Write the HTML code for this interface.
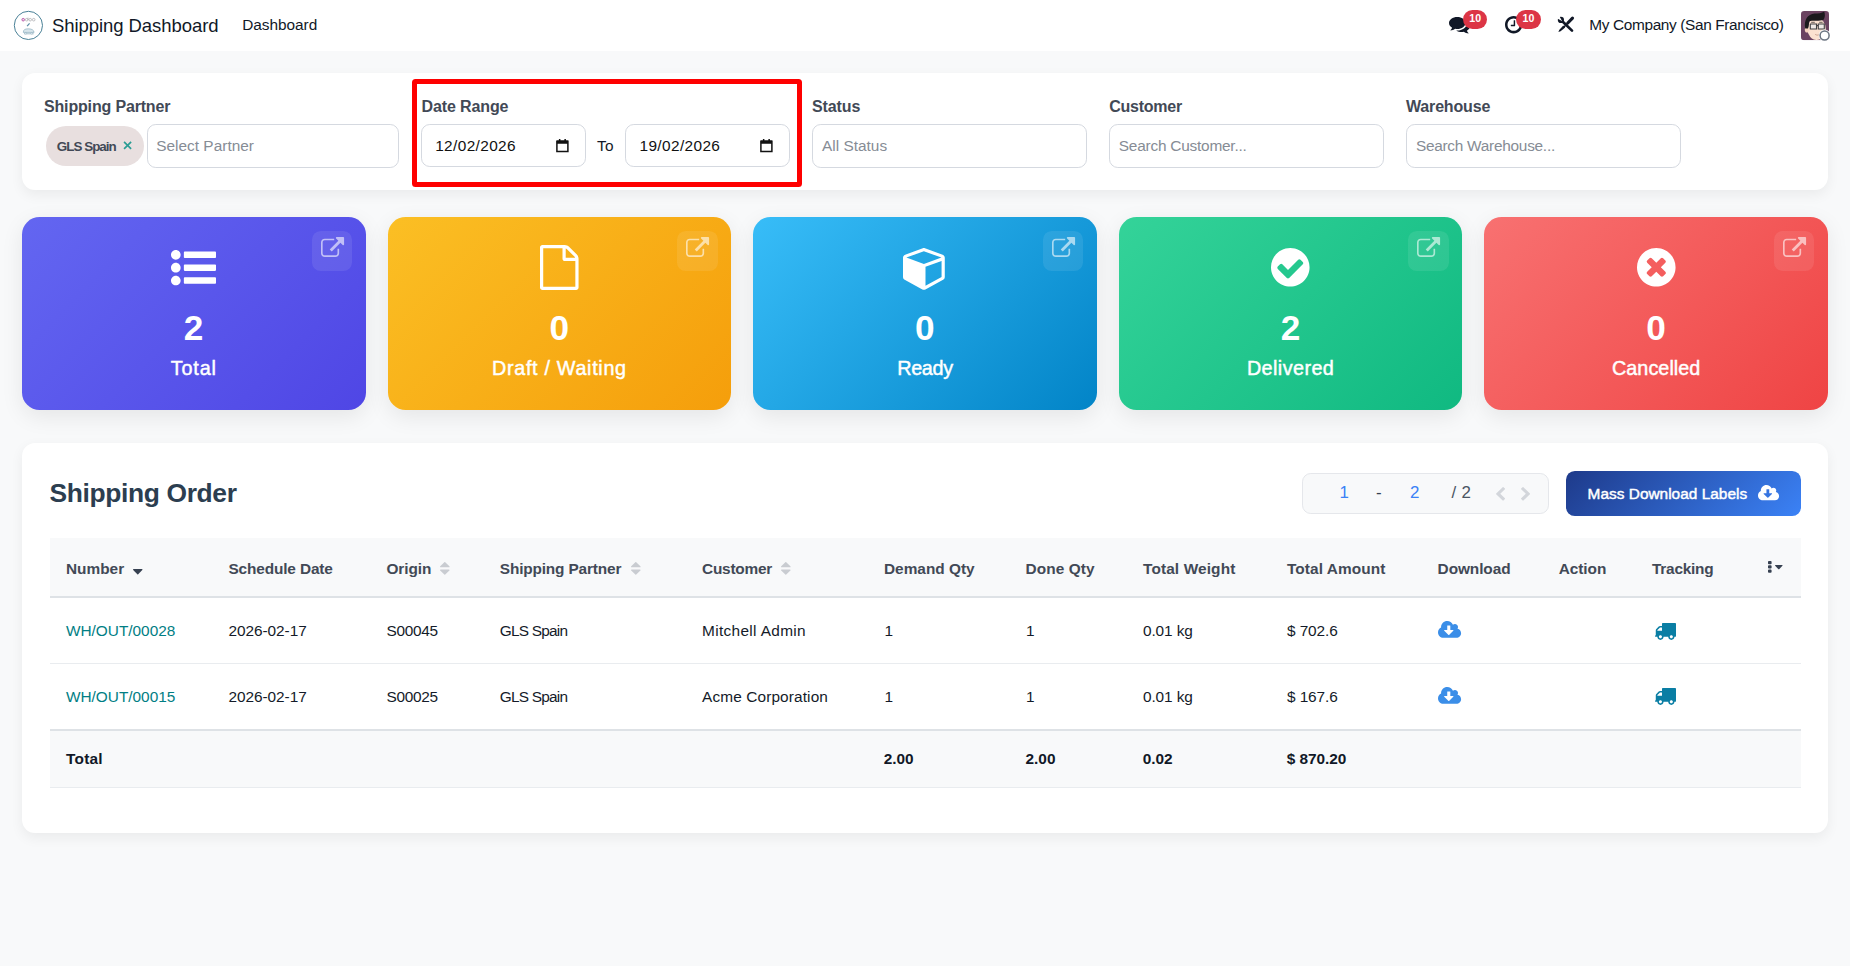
<!DOCTYPE html>
<html lang="en"><head><meta charset="utf-8"><title>Shipping Dashboard</title>
<style>
html,body{margin:0;padding:0}
body{width:1850px;height:966px;position:relative;overflow:hidden;background:#f8f9fa;font-family:"Liberation Sans",sans-serif}
.t{position:absolute;white-space:pre;line-height:1;display:block}
.ic{position:absolute;display:block;overflow:visible}
.abs{position:absolute;box-sizing:border-box}
.nav{position:absolute;left:0;top:0;width:1850px;height:51px;background:#fff}
.panel{position:absolute;background:#fff;border-radius:13.2px;box-shadow:0 4.4px 13.2px rgba(0,0,0,.06)}
.inp{position:absolute;box-sizing:border-box;background:#fff;border:1px solid #d5d9e0;border-radius:8.8px}
.card{position:absolute;top:217px;width:343.6px;height:193px;border-radius:17.6px;box-shadow:0 6.6px 22px rgba(0,0,0,.08)}
.open{position:absolute;right:13.6px;top:13.9px;width:40.4px;height:40.2px;border-radius:8.8px;background:rgba(255,255,255,.085)}
.badge{position:absolute;top:10.2px;width:24.5px;height:19px;border-radius:9.5px;background:#dc3545}
</style></head>
<body>
<header>
<div class="nav"></div>
<svg class="ic" style="left:13px;top:10px;width:31px;height:31px" viewBox="0 0 31 31">
<circle cx="15.400" cy="15.400" r="14.100" fill="#fff" stroke="#4a8197" stroke-width="1"/>
<circle cx="10.200" cy="9.700" r="1.300" fill="#f3d9ee" stroke="#b452a4" stroke-width=".9"/>
<path d="M12.400 9.700a1.300 1.300 0 1 0 2.600 0a1.300 1.300 0 1 0-2.600 0M15 7.600v2.400M15.900 9.700a1.300 1.300 0 1 0 2.600 0a1.300 1.300 0 1 0-2.600 0M19.400 9.700a1.300 1.300 0 1 0 2.600 0a1.300 1.300 0 1 0-2.600 0" fill="none" stroke="#9a9a9f" stroke-width=".6"/>
<path d="M14.100 16.200l2.500-2.900" stroke="#5a8ea6" stroke-width="1.200" fill="none"/>
<path d="M10.300 22.400c0-2.700 1.700-3.600 4.900-3.600c3.700 0 5.700 1.300 5.900 3.600z" fill="#d8e6ec" stroke="#7fa5b7" stroke-width=".6"/>
<path d="M11 23.800h9.600" stroke="#8fb0bf" stroke-width=".8"/>
<circle cx="12.800" cy="23.300" r=".9" fill="#fff" stroke="#7fa5b7" stroke-width=".5"/><circle cx="18.800" cy="23.300" r=".9" fill="#fff" stroke="#7fa5b7" stroke-width=".5"/>
</svg>
<svg class="ic" style="left:1448.5px;top:17.0px;width:21.0px;height:16.5px;" viewBox="0 -1280 1792 1408.203066359433" preserveAspectRatio="none"><path fill="#111827" transform="scale(1,-1)" d="M1408 768C1408 1051 1093 1280 704 1280C315 1280 0 1051 0 768C0 606 104 461 266 367C232 284 188 245 149 201C138 188 125 176 129 157C129 157 129 157 129 157C132 140 146 128 161 128C162 128 163 128 164 128C194 132 223 137 250 144C351 170 445 213 528 272C584 262 643 256 704 256C1093 256 1408 485 1408 768ZM1792 512C1792 679 1682 827 1513 920C1528 871 1536 820 1536 768C1536 589 1444 424 1277 302C1122 190 919 128 704 128C675 128 645 130 616 132C741 50 907 0 1088 0C1149 0 1208 6 1264 16C1347 -43 1441 -86 1542 -112C1569 -119 1598 -124 1628 -128C1644 -130 1659 -117 1663 -99C1663 -99 1663 -99 1663 -99C1667 -80 1654 -68 1643 -55C1604 -11 1560 28 1526 111C1688 205 1792 349 1792 512Z"/></svg><svg class="ic" style="left:1504.6px;top:16.1px;width:17.4px;height:17.4px;" viewBox="0 -1408 1536 1536" preserveAspectRatio="none"><path fill="#111827" transform="scale(1,-1)" d="M896 992C896 1010 882 1024 864 1024H800C782 1024 768 1010 768 992V640H544C526 640 512 626 512 608V544C512 526 526 512 544 512H864C882 512 896 526 896 544ZM1312 640C1312 340 1068 96 768 96C468 96 224 340 224 640C224 940 468 1184 768 1184C1068 1184 1312 940 1312 640ZM1536 640C1536 1064 1192 1408 768 1408C344 1408 0 1064 0 640C0 216 344 -128 768 -128C1192 -128 1536 216 1536 640Z"/></svg>
<div class="badge" style="left:1462.9px"></div><div class="badge" style="left:1516.1px"></div>
<svg class="ic" style="left:1557px;top:16px;width:18px;height:17px" viewBox="0 0 18 17">
<path d="M4 4l11 10.600" stroke="#111827" stroke-width="2.700" stroke-linecap="round" fill="none"/>
<circle cx="3.900" cy="3.900" r="3.100" fill="#111827"/>
<path d="M3.500 3.500L-1 1L1 -1z" fill="#fff" stroke="#fff" stroke-width="1.300"/>
<path d="M15.500 2.200l-4.700 4.800" stroke="#111827" stroke-width="3.100" stroke-linecap="round" fill="none"/>
<path d="M11.300 6.600l-4.600 4.600" stroke="#111827" stroke-width="1.500" fill="none"/>
<path d="M6.300 9.600l1.900 1.900l-4.600 3.800l-2.200.8l.8-2.200z" fill="#111827"/>
</svg>
<svg class="ic" style="left:1801px;top:10.8px;width:30px;height:31px" viewBox="0 0 30 31">
<defs><clipPath id="av"><rect x="0" y="0" width="28" height="29.200" rx="3.200"/></clipPath></defs>
<g clip-path="url(#av)">
<rect x="0" y="0" width="28" height="29.200" fill="#6b4361"/>
<ellipse cx="15.600" cy="18" rx="9.200" ry="11" fill="#fbe1d0"/>
<ellipse cx="5.800" cy="18.800" rx="2" ry="2.800" fill="#f7d3bf"/>
<path d="M4.200 17.600C2.600 9 6.600 3.400 13.600 2.600c3.600-.4 7-.400 9.600-2.200c1.200 3.200.8 6.200-.6 8.400c-4.600 1.800-9.600 .4-14.400 1.400c-.4 2.400 0 5-1.200 7.400z" fill="#1b191d"/>
<path d="M9.300 13h6.200v5H9.300zM17.300 13h6v5h-6zM15.500 14.600h1.800" fill="#efe9e6" stroke="#3f3f41" stroke-width="1.100"/>
<path d="M10.200 11.300h3.600M18.200 11.300h3.400" stroke="#2a2626" stroke-width=".7"/>
<path d="M14.200 23.400c1.600 1 3.600 1 5.400-.2" stroke="#b98877" stroke-width=".7" fill="none"/>
</g>
<circle cx="23.600" cy="24.500" r="5.900" fill="#fff"/>
<circle cx="23.600" cy="24.500" r="4.500" fill="#fff" stroke="#6b7480" stroke-width="1.500"/>
</svg>
<span class="t" style="left:52.00px;top:16.94px;font-size:18.5px;font-weight:400;color:#111827;letter-spacing:-0.066px">Shipping Dashboard</span>
<span class="t" style="left:242.20px;top:16.76px;font-size:15.4px;font-weight:400;color:#111827;letter-spacing:-0.035px">Dashboard</span>
<span class="t" style="left:1589.30px;top:17.16px;font-size:15.4px;font-weight:400;color:#111827;letter-spacing:-0.359px">My Company (San Francisco)</span>
<span class="t" style="left:1469.22px;top:12.63px;font-size:10.6px;font-weight:700;color:#fff;letter-spacing:0.078px">10</span>
<span class="t" style="left:1522.42px;top:12.63px;font-size:10.6px;font-weight:700;color:#fff;letter-spacing:0.078px">10</span>
</header>

<section class="filters">
<div class="panel" style="left:22px;top:72.6px;width:1806px;height:117.2px"></div>
<div class="abs" style="left:46px;top:126.2px;width:97.8px;height:39.6px;border-radius:20px;background:#e8dfdf"></div>
<svg class="ic" style="left:122.6px;top:141.2px;width:9.2px;height:8.8px" viewBox="0 0 10 10"><path d="M1 1l8 8M9 1l-8 8" stroke="#2a9d94" stroke-width="1.9" fill="none"/></svg>
<div class="inp" style="left:147px;top:124.2px;width:252px;height:43.4px"></div>
<div class="inp" style="left:421px;top:124.2px;width:165px;height:42.6px"></div>
<div class="inp" style="left:625.2px;top:124.2px;width:165px;height:42.6px"></div>
<div class="inp" style="left:812px;top:124.2px;width:275px;height:43.6px"></div>
<div class="inp" style="left:1109px;top:124.2px;width:275px;height:43.6px"></div>
<div class="inp" style="left:1406px;top:124.2px;width:275px;height:43.6px"></div>
<svg class="ic" style="left:555.6px;top:138.8px;width:12.8px;height:13.4px" viewBox="0 0 12.800 13.400"><path d="M.9 2.200h11v10.300H.9z" fill="none" stroke="#111" stroke-width="1.500"/><path d="M.9 1.500h11v3.200H.9zM2.900 0h1.500v2H2.900zM8.400 0h1.500v2H8.400z" fill="#111"/></svg>
<svg class="ic" style="left:759.6px;top:138.8px;width:12.8px;height:13.4px" viewBox="0 0 12.800 13.400"><path d="M.9 2.200h11v10.300H.9z" fill="none" stroke="#111" stroke-width="1.500"/><path d="M.9 1.500h11v3.200H.9zM2.900 0h1.500v2H2.900zM8.400 0h1.500v2H8.400z" fill="#111"/></svg>
<div class="abs" style="left:412px;top:79px;width:390px;height:108px;border:5px solid #fe0000;border-radius:3.5px"></div>
<span class="t" style="left:44.00px;top:99.46px;font-size:16px;font-weight:700;color:#424956;letter-spacing:-0.165px">Shipping Partner</span>
<span class="t" style="left:421.50px;top:99.46px;font-size:16px;font-weight:700;color:#424956;letter-spacing:-0.114px">Date Range</span>
<span class="t" style="left:812.00px;top:99.46px;font-size:16px;font-weight:700;color:#424956;letter-spacing:-0.112px">Status</span>
<span class="t" style="left:1109.20px;top:99.46px;font-size:16px;font-weight:700;color:#424956;letter-spacing:-0.234px">Customer</span>
<span class="t" style="left:1406.00px;top:99.46px;font-size:16px;font-weight:700;color:#424956;letter-spacing:-0.168px">Warehouse</span>
<span class="t" style="left:56.80px;top:139.66px;font-size:13.4px;font-weight:700;color:#424956;letter-spacing:-0.969px">GLS Spain</span>
<span class="t" style="left:156.20px;top:137.96px;font-size:15.4px;font-weight:400;color:#868c95;letter-spacing:0.019px">Select Partner</span>
<span class="t" style="left:435.20px;top:137.96px;font-size:15.4px;font-weight:400;color:#111111;letter-spacing:0.375px">12/02/2026</span>
<span class="t" style="left:597.00px;top:138.16px;font-size:15.4px;font-weight:400;color:#141b29;letter-spacing:0.281px">To</span>
<span class="t" style="left:639.50px;top:137.96px;font-size:15.4px;font-weight:400;color:#111111;letter-spacing:0.375px">19/02/2026</span>
<span class="t" style="left:822.00px;top:137.96px;font-size:15.4px;font-weight:400;color:#868c95;letter-spacing:0.009px">All Status</span>
<span class="t" style="left:1118.80px;top:137.96px;font-size:15.4px;font-weight:400;color:#868c95;letter-spacing:-0.218px">Search Customer...</span>
<span class="t" style="left:1415.90px;top:137.96px;font-size:15.4px;font-weight:400;color:#868c95;letter-spacing:-0.262px">Search Warehouse...</span>
</section>

<section class="cards">
<div class="card" style="left:22.0px;background:linear-gradient(135deg,#6366f1 0%,#4f46e5 100%)"><div class="open"></div></div>
<svg class="ic" style="left:171.3px;top:250.02px;width:45.0px;height:35.36px;" viewBox="0 -1344 1792 1408" preserveAspectRatio="none"><path fill="#fff" transform="scale(1,-1)" d="M384 128C384 234 298 320 192 320C86 320 0 234 0 128C0 22 86 -64 192 -64C298 -64 384 22 384 128ZM384 640C384 746 298 832 192 832C86 832 0 746 0 640C0 534 86 448 192 448C298 448 384 534 384 640ZM1792 224C1792 241 1777 256 1760 256H544C527 256 512 241 512 224V32C512 15 527 0 544 0H1760C1777 0 1792 15 1792 32ZM384 1152C384 1258 298 1344 192 1344C86 1344 0 1258 0 1152C0 1046 86 960 192 960C298 960 384 1046 384 1152ZM1792 736C1792 753 1777 768 1760 768H544C527 768 512 753 512 736V544C512 527 527 512 544 512H1760C1777 512 1792 527 1792 544ZM1792 1248C1792 1265 1777 1280 1760 1280H544C527 1280 512 1265 512 1248V1056C512 1039 527 1024 544 1024H1760C1777 1024 1792 1039 1792 1056Z"/></svg>
<svg class="ic" style="left:320.6px;top:237.0px;width:23.1px;height:20.0px;" viewBox="0 -1536 1792 1536" preserveAspectRatio="none"><path fill="rgba(255,255,255,.6)" transform="scale(1,-1)" d="M1408 608C1408 626 1394 640 1376 640H1312C1294 640 1280 626 1280 608V288C1280 200 1208 128 1120 128H288C200 128 128 200 128 288V1120C128 1208 200 1280 288 1280H992C1010 1280 1024 1294 1024 1312V1376C1024 1394 1010 1408 992 1408H288C129 1408 0 1279 0 1120V288C0 129 129 0 288 0H1120C1279 0 1408 129 1408 288ZM1792 1472C1792 1507 1763 1536 1728 1536H1216C1181 1536 1152 1507 1152 1472C1152 1455 1159 1439 1171 1427L1347 1251L695 599C689 593 685 584 685 576C685 568 689 559 695 553L809 439C815 433 824 429 832 429C840 429 849 433 855 439L1507 1091L1683 915C1695 903 1711 896 1728 896C1763 896 1792 925 1792 960Z"/></svg>
<div class="card" style="left:387.6px;background:linear-gradient(135deg,#fbbf24 0%,#f59e0b 100%)"><div class="open"></div></div>
<svg class="ic" style="left:540.11px;top:245.2px;width:38.57px;height:45.0px;" viewBox="0 -1536 1536 1792" preserveAspectRatio="none"><path fill="#fff" transform="scale(1,-1)" d="M1468 1156 1156 1468C1119 1505 1045 1536 992 1536H96C43 1536 0 1493 0 1440V-160C0 -213 43 -256 96 -256H1440C1493 -256 1536 -213 1536 -160V992C1536 1045 1505 1119 1468 1156ZM1024 1400C1041 1394 1058 1385 1065 1378L1378 1065C1385 1058 1394 1041 1400 1024H1024ZM1408 -128H128V1408H896V992C896 939 939 896 992 896H1408Z"/></svg>
<svg class="ic" style="left:686.2px;top:237.0px;width:23.1px;height:20.0px;" viewBox="0 -1536 1792 1536" preserveAspectRatio="none"><path fill="rgba(255,255,255,.6)" transform="scale(1,-1)" d="M1408 608C1408 626 1394 640 1376 640H1312C1294 640 1280 626 1280 608V288C1280 200 1208 128 1120 128H288C200 128 128 200 128 288V1120C128 1208 200 1280 288 1280H992C1010 1280 1024 1294 1024 1312V1376C1024 1394 1010 1408 992 1408H288C129 1408 0 1279 0 1120V288C0 129 129 0 288 0H1120C1279 0 1408 129 1408 288ZM1792 1472C1792 1507 1763 1536 1728 1536H1216C1181 1536 1152 1507 1152 1472C1152 1455 1159 1439 1171 1427L1347 1251L695 599C689 593 685 584 685 576C685 568 689 559 695 553L809 439C815 433 824 429 832 429C840 429 849 433 855 439L1507 1091L1683 915C1695 903 1711 896 1728 896C1763 896 1792 925 1792 960Z"/></svg>
<div class="card" style="left:753.2px;background:linear-gradient(135deg,#38bdf8 0%,#0284c7 100%)"><div class="open"></div></div>
<svg class="ic" style="left:902.5px;top:248.41px;width:41.79px;height:41.79px;" viewBox="0 -1408 1664 1664" preserveAspectRatio="none"><path fill="#fff" transform="scale(1,-1)" d="M896 -93V659L1536 892V256ZM832 772 134 1026 832 1280 1530 1026ZM1664 1024C1664 1078 1630 1126 1580 1144L876 1400C862 1405 847 1408 832 1408C817 1408 802 1405 788 1400L84 1144C34 1126 0 1078 0 1024V256C0 209 26 166 67 144L771 -240C790 -251 811 -256 832 -256C853 -256 874 -251 893 -240L1597 144C1638 166 1664 209 1664 256Z"/></svg>
<svg class="ic" style="left:1051.8px;top:237.0px;width:23.1px;height:20.0px;" viewBox="0 -1536 1792 1536" preserveAspectRatio="none"><path fill="rgba(255,255,255,.6)" transform="scale(1,-1)" d="M1408 608C1408 626 1394 640 1376 640H1312C1294 640 1280 626 1280 608V288C1280 200 1208 128 1120 128H288C200 128 128 200 128 288V1120C128 1208 200 1280 288 1280H992C1010 1280 1024 1294 1024 1312V1376C1024 1394 1010 1408 992 1408H288C129 1408 0 1279 0 1120V288C0 129 129 0 288 0H1120C1279 0 1408 129 1408 288ZM1792 1472C1792 1507 1763 1536 1728 1536H1216C1181 1536 1152 1507 1152 1472C1152 1455 1159 1439 1171 1427L1347 1251L695 599C689 593 685 584 685 576C685 568 689 559 695 553L809 439C815 433 824 429 832 429C840 429 849 433 855 439L1507 1091L1683 915C1695 903 1711 896 1728 896C1763 896 1792 925 1792 960Z"/></svg>
<div class="card" style="left:1118.8px;background:linear-gradient(135deg,#34d399 0%,#10b981 100%)"><div class="open"></div></div>
<svg class="ic" style="left:1271.31px;top:248.41px;width:38.57px;height:38.57px;" viewBox="0 -1408 1536 1536" preserveAspectRatio="none"><path fill="#fff" transform="scale(1,-1)" d="M1284 802C1284 785 1278 769 1266 757L723 214C711 202 694 195 677 195C661 195 644 202 632 214L270 576C258 588 252 604 252 621C252 638 258 655 270 667L361 757C373 769 389 776 406 776C423 776 439 769 451 757L677 531L1085 938C1097 950 1113 957 1130 957C1147 957 1163 950 1175 938L1266 848C1278 836 1284 819 1284 802ZM1536 640C1536 1064 1192 1408 768 1408C344 1408 0 1064 0 640C0 216 344 -128 768 -128C1192 -128 1536 216 1536 640Z"/></svg>
<svg class="ic" style="left:1417.4px;top:237.0px;width:23.1px;height:20.0px;" viewBox="0 -1536 1792 1536" preserveAspectRatio="none"><path fill="rgba(255,255,255,.6)" transform="scale(1,-1)" d="M1408 608C1408 626 1394 640 1376 640H1312C1294 640 1280 626 1280 608V288C1280 200 1208 128 1120 128H288C200 128 128 200 128 288V1120C128 1208 200 1280 288 1280H992C1010 1280 1024 1294 1024 1312V1376C1024 1394 1010 1408 992 1408H288C129 1408 0 1279 0 1120V288C0 129 129 0 288 0H1120C1279 0 1408 129 1408 288ZM1792 1472C1792 1507 1763 1536 1728 1536H1216C1181 1536 1152 1507 1152 1472C1152 1455 1159 1439 1171 1427L1347 1251L695 599C689 593 685 584 685 576C685 568 689 559 695 553L809 439C815 433 824 429 832 429C840 429 849 433 855 439L1507 1091L1683 915C1695 903 1711 896 1728 896C1763 896 1792 925 1792 960Z"/></svg>
<div class="card" style="left:1484.4px;background:linear-gradient(135deg,#f87171 0%,#ef4444 100%)"><div class="open"></div></div>
<svg class="ic" style="left:1636.91px;top:248.41px;width:38.57px;height:38.57px;" viewBox="0 -1408 1536 1536" preserveAspectRatio="none"><path fill="#fff" transform="scale(1,-1)" d="M1149 414C1149 397 1142 380 1130 368L1040 278C1028 266 1011 259 994 259C977 259 961 266 949 278L768 459L587 278C575 266 559 259 542 259C525 259 508 266 496 278L406 368C394 380 387 397 387 414C387 431 394 447 406 459L587 640L406 821C394 833 387 849 387 866C387 883 394 900 406 912L496 1002C508 1014 525 1021 542 1021C559 1021 575 1014 587 1002L768 821L949 1002C961 1014 977 1021 994 1021C1011 1021 1028 1014 1040 1002L1130 912C1142 900 1149 883 1149 866C1149 849 1142 833 1130 821L949 640L1130 459C1142 447 1149 431 1149 414ZM1536 640C1536 1064 1192 1408 768 1408C344 1408 0 1064 0 640C0 216 344 -128 768 -128C1192 -128 1536 216 1536 640Z"/></svg>
<svg class="ic" style="left:1783.0px;top:237.0px;width:23.1px;height:20.0px;" viewBox="0 -1536 1792 1536" preserveAspectRatio="none"><path fill="rgba(255,255,255,.6)" transform="scale(1,-1)" d="M1408 608C1408 626 1394 640 1376 640H1312C1294 640 1280 626 1280 608V288C1280 200 1208 128 1120 128H288C200 128 128 200 128 288V1120C128 1208 200 1280 288 1280H992C1010 1280 1024 1294 1024 1312V1376C1024 1394 1010 1408 992 1408H288C129 1408 0 1279 0 1120V288C0 129 129 0 288 0H1120C1279 0 1408 129 1408 288ZM1792 1472C1792 1507 1763 1536 1728 1536H1216C1181 1536 1152 1507 1152 1472C1152 1455 1159 1439 1171 1427L1347 1251L695 599C689 593 685 584 685 576C685 568 689 559 695 553L809 439C815 433 824 429 832 429C840 429 849 433 855 439L1507 1091L1683 915C1695 903 1711 896 1728 896C1763 896 1792 925 1792 960Z"/></svg>

<span class="t" style="left:183.87px;top:310.20px;font-size:35.2px;font-weight:700;color:#fff;letter-spacing:0.281px">2</span>
<span class="t" style="left:170.85px;top:358.74px;font-size:19.8px;font-weight:500;color:#fff;letter-spacing:0.819px;-webkit-text-stroke:0.45px #fff">Total</span>
<span class="t" style="left:549.47px;top:310.20px;font-size:35.2px;font-weight:700;color:#fff;letter-spacing:0.281px">0</span>
<span class="t" style="left:492.01px;top:358.74px;font-size:19.8px;font-weight:500;color:#fff;letter-spacing:0.679px;-webkit-text-stroke:0.45px #fff">Draft / Waiting</span>
<span class="t" style="left:915.07px;top:310.20px;font-size:35.2px;font-weight:700;color:#fff;letter-spacing:0.281px">0</span>
<span class="t" style="left:897.20px;top:358.74px;font-size:19.8px;font-weight:500;color:#fff;letter-spacing:-0.316px;-webkit-text-stroke:0.45px #fff">Ready</span>
<span class="t" style="left:1280.67px;top:310.20px;font-size:35.2px;font-weight:700;color:#fff;letter-spacing:0.281px">2</span>
<span class="t" style="left:1246.92px;top:358.74px;font-size:19.8px;font-weight:500;color:#fff;letter-spacing:0.422px;-webkit-text-stroke:0.45px #fff">Delivered</span>
<span class="t" style="left:1646.27px;top:310.20px;font-size:35.2px;font-weight:700;color:#fff;letter-spacing:0.281px">0</span>
<span class="t" style="left:1611.96px;top:358.74px;font-size:19.8px;font-weight:500;color:#fff;letter-spacing:0.056px;-webkit-text-stroke:0.45px #fff">Cancelled</span>
</section>

<section class="orders">
<div class="panel" style="left:22px;top:443.2px;width:1806px;height:389.6px"></div>
<div class="abs" style="left:1302px;top:473px;width:247px;height:40.8px;border-radius:8.8px;background:#f8f9fa;border:1px solid #e5e7eb"></div>
<div class="abs" style="left:1566px;top:471px;width:235px;height:45px;border-radius:8.8px;background:linear-gradient(135deg,#1e3a8a 0%,#3b82f6 100%)"></div>
<div class="abs" style="left:50px;top:538.2px;width:1751px;height:57.8px;background:#f8f9fa"></div>
<div class="abs" style="left:50px;top:596px;width:1751px;height:2.3px;background:#dee2e6"></div>
<div class="abs" style="left:50px;top:663px;width:1751px;height:1px;background:#e9ecef"></div>
<div class="abs" style="left:50px;top:729px;width:1751px;height:2px;background:#dee2e6"></div>
<div class="abs" style="left:50px;top:731px;width:1751px;height:56.2px;background:#f8f9fa"></div>
<div class="abs" style="left:50px;top:787.2px;width:1751px;height:1px;background:#e9ecef"></div>
<svg class="ic" style="left:1437.7px;top:621.1px;width:23.1px;height:16.7px;" viewBox="0 -1408 1920 1408" preserveAspectRatio="none"><path fill="#3b8ee8" transform="scale(1,-1)" d="M1280 608C1280 599 1276 591 1270 584L919 233C913 227 904 224 896 224C887 224 879 227 873 233L521 585C515 591 512 600 512 608C512 625 526 640 544 640H768V992C768 1009 783 1024 800 1024H992C1009 1024 1024 1009 1024 992V640H1248C1266 640 1280 626 1280 608ZM1920 384C1920 562 1797 717 1623 758C1650 799 1664 847 1664 896C1664 1037 1549 1152 1408 1152C1347 1152 1288 1130 1242 1090C1163 1282 976 1408 768 1408C485 1408 256 1179 256 896C256 882 257 868 258 853C101 780 0 622 0 448C0 201 201 0 448 0H1536C1748 0 1920 172 1920 384Z"/></svg><svg class="ic" style="left:1655.4px;top:622.6px;width:21.0px;height:16.9px;" viewBox="64 -1280 1728 1408" preserveAspectRatio="none"><path fill="#0a7ea4" transform="scale(1,-1)" d="M640 128C640 58 582 0 512 0C442 0 384 58 384 128C384 198 442 256 512 256C582 256 640 198 640 128ZM256 640V670C256 674 262 689 265 692L460 887C463 890 478 896 482 896H640V640ZM1536 128C1536 58 1478 0 1408 0C1338 0 1280 58 1280 128C1280 198 1338 256 1408 256C1478 256 1536 198 1536 128ZM1792 1216C1792 1251 1763 1280 1728 1280H704C669 1280 640 1251 640 1216V1024H480C444 1024 396 1004 371 979L173 781C118 726 128 647 128 576V256C93 256 64 227 64 192C64 118 142 128 192 128H256C256 -13 371 -128 512 -128C653 -128 768 -13 768 128H1152C1152 -13 1267 -128 1408 -128C1549 -128 1664 -13 1664 128C1714 128 1792 118 1792 192Z"/></svg><svg class="ic" style="left:1437.7px;top:686.8px;width:23.1px;height:16.7px;" viewBox="0 -1408 1920 1408" preserveAspectRatio="none"><path fill="#3b8ee8" transform="scale(1,-1)" d="M1280 608C1280 599 1276 591 1270 584L919 233C913 227 904 224 896 224C887 224 879 227 873 233L521 585C515 591 512 600 512 608C512 625 526 640 544 640H768V992C768 1009 783 1024 800 1024H992C1009 1024 1024 1009 1024 992V640H1248C1266 640 1280 626 1280 608ZM1920 384C1920 562 1797 717 1623 758C1650 799 1664 847 1664 896C1664 1037 1549 1152 1408 1152C1347 1152 1288 1130 1242 1090C1163 1282 976 1408 768 1408C485 1408 256 1179 256 896C256 882 257 868 258 853C101 780 0 622 0 448C0 201 201 0 448 0H1536C1748 0 1920 172 1920 384Z"/></svg><svg class="ic" style="left:1655.4px;top:688.3px;width:21.0px;height:16.9px;" viewBox="64 -1280 1728 1408" preserveAspectRatio="none"><path fill="#0a7ea4" transform="scale(1,-1)" d="M640 128C640 58 582 0 512 0C442 0 384 58 384 128C384 198 442 256 512 256C582 256 640 198 640 128ZM256 640V670C256 674 262 689 265 692L460 887C463 890 478 896 482 896H640V640ZM1536 128C1536 58 1478 0 1408 0C1338 0 1280 58 1280 128C1280 198 1338 256 1408 256C1478 256 1536 198 1536 128ZM1792 1216C1792 1251 1763 1280 1728 1280H704C669 1280 640 1251 640 1216V1024H480C444 1024 396 1004 371 979L173 781C118 726 128 647 128 576V256C93 256 64 227 64 192C64 118 142 128 192 128H256C256 -13 371 -128 512 -128C653 -128 768 -13 768 128H1152C1152 -13 1267 -128 1408 -128C1549 -128 1664 -13 1664 128C1714 128 1792 118 1792 192Z"/></svg><svg class="ic" style="left:1757.9px;top:484.7px;width:21.1px;height:15.3px;" viewBox="0 -1408 1920 1408" preserveAspectRatio="none"><path fill="#fff" transform="scale(1,-1)" d="M1280 608C1280 599 1276 591 1270 584L919 233C913 227 904 224 896 224C887 224 879 227 873 233L521 585C515 591 512 600 512 608C512 625 526 640 544 640H768V992C768 1009 783 1024 800 1024H992C1009 1024 1024 1009 1024 992V640H1248C1266 640 1280 626 1280 608ZM1920 384C1920 562 1797 717 1623 758C1650 799 1664 847 1664 896C1664 1037 1549 1152 1408 1152C1347 1152 1288 1130 1242 1090C1163 1282 976 1408 768 1408C485 1408 256 1179 256 896C256 882 257 868 258 853C101 780 0 622 0 448C0 201 201 0 448 0H1536C1748 0 1920 172 1920 384Z"/></svg><svg class="ic" style="left:132.6px;top:569.0px;width:9.5px;height:5.5px;" viewBox="0 -896 1024 576" preserveAspectRatio="none"><path fill="#374151" transform="scale(1,-1)" d="M1024 832C1024 867 995 896 960 896H64C29 896 0 867 0 832C0 815 7 799 19 787L467 339C479 327 495 320 512 320C529 320 545 327 557 339L1005 787C1017 799 1024 815 1024 832Z"/></svg><svg class="ic" style="left:439.8px;top:562.3px;width:9.6px;height:12.8px;" viewBox="0 -1344 1024 1408" preserveAspectRatio="none"><path fill="#c9ccd1" transform="scale(1,-1)" d="M1024 448C1024 483 995 512 960 512H64C29 512 0 483 0 448C0 431 7 415 19 403L467 -45C479 -57 495 -64 512 -64C529 -64 545 -57 557 -45L1005 403C1017 415 1024 431 1024 448ZM1024 832C1024 849 1017 865 1005 877L557 1325C545 1337 529 1344 512 1344C495 1344 479 1337 467 1325L19 877C7 865 0 849 0 832C0 797 29 768 64 768H960C995 768 1024 797 1024 832Z"/></svg><svg class="ic" style="left:631.0px;top:562.3px;width:9.6px;height:12.8px;" viewBox="0 -1344 1024 1408" preserveAspectRatio="none"><path fill="#c9ccd1" transform="scale(1,-1)" d="M1024 448C1024 483 995 512 960 512H64C29 512 0 483 0 448C0 431 7 415 19 403L467 -45C479 -57 495 -64 512 -64C529 -64 545 -57 557 -45L1005 403C1017 415 1024 431 1024 448ZM1024 832C1024 849 1017 865 1005 877L557 1325C545 1337 529 1344 512 1344C495 1344 479 1337 467 1325L19 877C7 865 0 849 0 832C0 797 29 768 64 768H960C995 768 1024 797 1024 832Z"/></svg><svg class="ic" style="left:780.8px;top:562.3px;width:9.6px;height:12.8px;" viewBox="0 -1344 1024 1408" preserveAspectRatio="none"><path fill="#c9ccd1" transform="scale(1,-1)" d="M1024 448C1024 483 995 512 960 512H64C29 512 0 483 0 448C0 431 7 415 19 403L467 -45C479 -57 495 -64 512 -64C529 -64 545 -57 557 -45L1005 403C1017 415 1024 431 1024 448ZM1024 832C1024 849 1017 865 1005 877L557 1325C545 1337 529 1344 512 1344C495 1344 479 1337 467 1325L19 877C7 865 0 849 0 832C0 797 29 768 64 768H960C995 768 1024 797 1024 832Z"/></svg><svg class="ic" style="left:1767.6px;top:561.2px;width:3.6px;height:11.8px;" viewBox="0 -1408 384 1408" preserveAspectRatio="none"><path fill="#374151" transform="scale(1,-1)" d="M384 288C384 341 341 384 288 384H96C43 384 0 341 0 288V96C0 43 43 0 96 0H288C341 0 384 43 384 96ZM384 800C384 853 341 896 288 896H96C43 896 0 853 0 800V608C0 555 43 512 96 512H288C341 512 384 555 384 608ZM384 1312C384 1365 341 1408 288 1408H96C43 1408 0 1365 0 1312V1120C0 1067 43 1024 96 1024H288C341 1024 384 1067 384 1120Z"/></svg><svg class="ic" style="left:1775.4px;top:564.9px;width:7.6px;height:4.3px;" viewBox="0 -896 1024 576" preserveAspectRatio="none"><path fill="#374151" transform="scale(1,-1)" d="M1024 832C1024 867 995 896 960 896H64C29 896 0 867 0 832C0 815 7 799 19 787L467 339C479 327 495 320 512 320C529 320 545 327 557 339L1005 787C1017 799 1024 815 1024 832Z"/></svg><svg class="ic" style="left:1495.8px;top:486.5px;width:9.1px;height:13.7px;" viewBox="154.25 -1509.75 1035.5 1611.5" preserveAspectRatio="none"><path fill="#d3d6db" transform="scale(1,-1)" d="M1171 1235C1196 1260 1196 1300 1171 1325L1005 1491C980 1516 940 1516 915 1491L173 749C148 724 148 684 173 659L915 -83C940 -108 980 -108 1005 -83L1171 83C1196 108 1196 148 1171 173L640 704L1171 1235Z"/></svg><svg class="ic" style="left:1520.8px;top:486.5px;width:9.1px;height:13.7px;" viewBox="90.25 -1509.75 1035.5 1611.5" preserveAspectRatio="none"><path fill="#d3d6db" transform="scale(1,-1)" d="M1107 659C1132 684 1132 724 1107 749L365 1491C340 1516 300 1516 275 1491L109 1325C84 1300 84 1260 109 1235L640 704L109 173C84 148 84 108 109 83L275 -83C300 -108 340 -108 365 -83L1107 659Z"/></svg>
<span class="t" style="left:49.40px;top:480.05px;font-size:26.4px;font-weight:700;color:#2c3e50;letter-spacing:-0.346px">Shipping Order</span>
<span class="t" style="left:1339.60px;top:484.89px;font-size:16.9px;font-weight:400;color:#3b82f6;letter-spacing:0.125px">1</span>
<span class="t" style="left:1376.00px;top:484.89px;font-size:16.9px;font-weight:400;color:#374151;letter-spacing:-0.734px">-</span>
<span class="t" style="left:1410.00px;top:484.89px;font-size:16.9px;font-weight:400;color:#3b82f6;letter-spacing:0.125px">2</span>
<span class="t" style="left:1451.60px;top:484.89px;font-size:16.9px;font-weight:400;color:#4b5563;letter-spacing:0.281px">/ 2</span>
<span class="t" style="left:1587.60px;top:485.76px;font-size:15.4px;font-weight:500;color:#fff;letter-spacing:0.020px;-webkit-text-stroke:0.45px #fff">Mass Download Labels</span>
<span class="t" style="left:66.00px;top:560.96px;font-size:15.4px;font-weight:700;color:#424956;letter-spacing:0.003px">Number</span>
<span class="t" style="left:228.40px;top:560.96px;font-size:15.4px;font-weight:700;color:#424956;letter-spacing:-0.127px">Schedule Date</span>
<span class="t" style="left:386.40px;top:560.96px;font-size:15.4px;font-weight:700;color:#424956;letter-spacing:-0.042px">Origin</span>
<span class="t" style="left:499.80px;top:560.96px;font-size:15.4px;font-weight:700;color:#424956;letter-spacing:-0.159px">Shipping Partner</span>
<span class="t" style="left:702.00px;top:560.96px;font-size:15.4px;font-weight:700;color:#424956;letter-spacing:-0.225px">Customer</span>
<span class="t" style="left:884.00px;top:560.96px;font-size:15.4px;font-weight:700;color:#424956;letter-spacing:-0.003px">Demand Qty</span>
<span class="t" style="left:1025.60px;top:560.96px;font-size:15.4px;font-weight:700;color:#424956;letter-spacing:0.078px">Done Qty</span>
<span class="t" style="left:1143.00px;top:560.96px;font-size:15.4px;font-weight:700;color:#424956;letter-spacing:0.125px">Total Weight</span>
<span class="t" style="left:1287.00px;top:560.96px;font-size:15.4px;font-weight:700;color:#424956;letter-spacing:0.089px">Total Amount</span>
<span class="t" style="left:1437.60px;top:560.96px;font-size:15.4px;font-weight:700;color:#424956;letter-spacing:-0.080px">Download</span>
<span class="t" style="left:1558.80px;top:560.96px;font-size:15.4px;font-weight:700;color:#424956;letter-spacing:-0.076px">Action</span>
<span class="t" style="left:1652.00px;top:560.96px;font-size:15.4px;font-weight:700;color:#424956;letter-spacing:-0.236px">Tracking</span>
<span class="t" style="left:66.00px;top:623.16px;font-size:15.4px;font-weight:400;color:#017e84;letter-spacing:-0.018px">WH/OUT/00028</span>
<span class="t" style="left:228.40px;top:623.16px;font-size:15.4px;font-weight:400;color:#141b29;letter-spacing:-0.039px">2026-02-17</span>
<span class="t" style="left:386.40px;top:623.16px;font-size:15.4px;font-weight:400;color:#141b29;letter-spacing:-0.268px">S00045</span>
<span class="t" style="left:499.80px;top:623.16px;font-size:15.4px;font-weight:400;color:#141b29;letter-spacing:-0.786px">GLS Spain</span>
<span class="t" style="left:702.00px;top:623.16px;font-size:15.4px;font-weight:400;color:#141b29;letter-spacing:0.338px">Mitchell Admin</span>
<span class="t" style="left:884.40px;top:623.16px;font-size:15.4px;font-weight:400;color:#141b29;letter-spacing:0.125px">1</span>
<span class="t" style="left:1026.00px;top:623.16px;font-size:15.4px;font-weight:400;color:#141b29;letter-spacing:0.125px">1</span>
<span class="t" style="left:1143.00px;top:623.16px;font-size:15.4px;font-weight:400;color:#141b29;letter-spacing:-0.118px">0.01 kg</span>
<span class="t" style="left:1287.00px;top:623.16px;font-size:15.4px;font-weight:400;color:#141b29;letter-spacing:-0.092px">$ 702.6</span>
<span class="t" style="left:66.00px;top:689.06px;font-size:15.4px;font-weight:400;color:#017e84;letter-spacing:-0.018px">WH/OUT/00015</span>
<span class="t" style="left:228.40px;top:689.06px;font-size:15.4px;font-weight:400;color:#141b29;letter-spacing:-0.039px">2026-02-17</span>
<span class="t" style="left:386.40px;top:689.06px;font-size:15.4px;font-weight:400;color:#141b29;letter-spacing:-0.268px">S00025</span>
<span class="t" style="left:499.80px;top:689.06px;font-size:15.4px;font-weight:400;color:#141b29;letter-spacing:-0.786px">GLS Spain</span>
<span class="t" style="left:702.00px;top:689.06px;font-size:15.4px;font-weight:400;color:#141b29;letter-spacing:0.124px">Acme Corporation</span>
<span class="t" style="left:884.40px;top:689.06px;font-size:15.4px;font-weight:400;color:#141b29;letter-spacing:0.125px">1</span>
<span class="t" style="left:1026.00px;top:689.06px;font-size:15.4px;font-weight:400;color:#141b29;letter-spacing:0.125px">1</span>
<span class="t" style="left:1143.00px;top:689.06px;font-size:15.4px;font-weight:400;color:#141b29;letter-spacing:-0.118px">0.01 kg</span>
<span class="t" style="left:1287.00px;top:689.06px;font-size:15.4px;font-weight:400;color:#141b29;letter-spacing:-0.092px">$ 167.6</span>
<span class="t" style="left:66.00px;top:750.66px;font-size:15.4px;font-weight:700;color:#111827;letter-spacing:0.250px">Total</span>
<span class="t" style="left:883.80px;top:750.66px;font-size:15.4px;font-weight:700;color:#111827;letter-spacing:-0.035px">2.00</span>
<span class="t" style="left:1025.60px;top:750.66px;font-size:15.4px;font-weight:700;color:#111827;letter-spacing:-0.035px">2.00</span>
<span class="t" style="left:1142.80px;top:750.66px;font-size:15.4px;font-weight:700;color:#111827;letter-spacing:-0.035px">0.02</span>
<span class="t" style="left:1286.80px;top:750.66px;font-size:15.4px;font-weight:700;color:#111827;letter-spacing:-0.051px">$ 870.20</span>
</section>
</body></html>
